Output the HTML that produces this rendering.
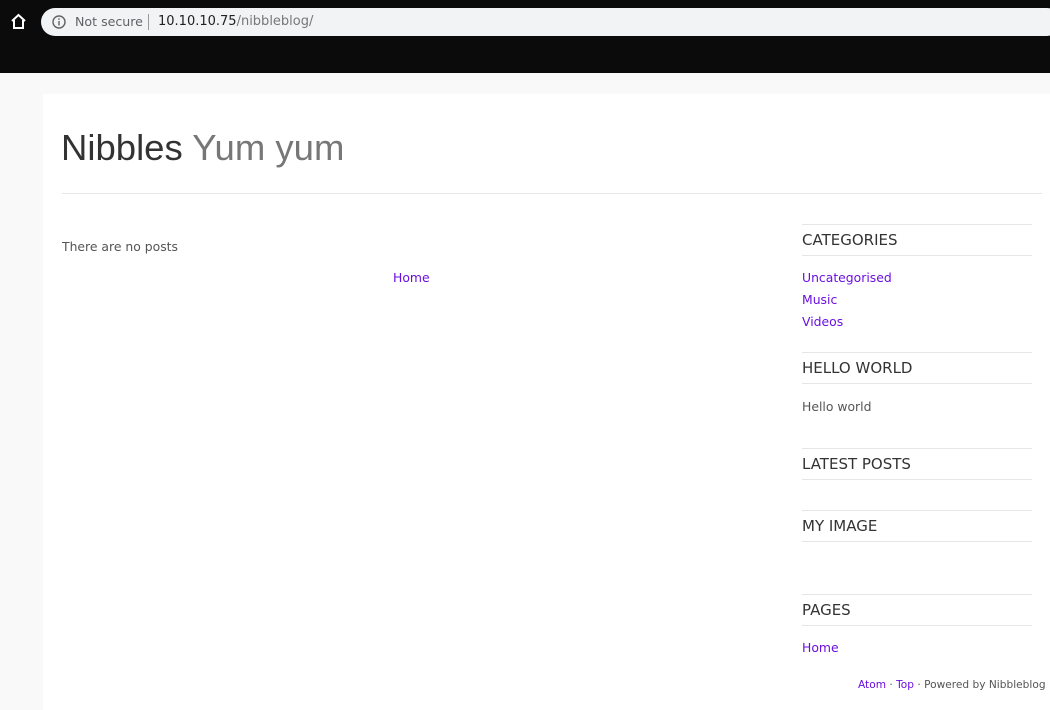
<!DOCTYPE html>
<html><head><meta charset="utf-8"><style>
body{margin:0;width:1050px;height:710px;overflow:hidden;background:#f9f9f9;font-family:"DejaVu Sans","Liberation Sans",sans-serif;color:#555;position:relative}
.top{position:absolute;left:0;top:0;width:1050px;height:73px;background:#0b0b0b}
.url{position:absolute;left:41px;top:8px;width:1020px;height:28px;border-radius:14px;background:#f1f3f4;font-size:12.6px;line-height:28px}
.a{position:absolute;font-size:12.4px;white-space:nowrap}
a,.l{color:#6b0fe0;text-decoration:none}
.page{position:absolute;left:43px;top:94px;width:1007px;height:616px;background:#fff}
.hr{position:absolute;height:1px;background:#e6e6e6}
.h{position:absolute;left:802px;font-size:15px;color:#333}
</style></head><body>
<div class="top"></div>
<svg style="position:absolute;left:10px;top:13px" width="17" height="17" viewBox="0 0 17 17"><path d="M2 8 L8.5 2 L15 8 M4 7 V15 H13 V7" fill="none" stroke="#fff" stroke-width="2"/></svg>
<div class="url">
<svg style="position:absolute;left:11px;top:7px" width="14" height="14" viewBox="0 0 14 14"><circle cx="7" cy="7" r="6" fill="none" stroke="#5f6368" stroke-width="1.4"/><rect x="6.3" y="6" width="1.4" height="4.5" fill="#5f6368"/><rect x="6.3" y="3.3" width="1.4" height="1.5" fill="#5f6368"/></svg>
<span style="position:absolute;left:34px;color:#5f6368">Not secure</span>
<span style="position:absolute;left:107px;top:6px;width:1px;height:16px;background:#999"></span>
<span style="position:absolute;left:117px;color:#202124;font-size:13px">10.10.10.75<span style="color:#777">/nibbleblog/</span></span>
</div>
<div class="page"></div>
<div class="a" style="left:61px;top:127px;font-size:36.5px;color:#333;font-family:'Liberation Sans',sans-serif">Nibbles <span style="color:#777">Yum yum</span></div>
<div class="hr" style="left:62px;top:193px;width:980px"></div>
<div class="a" style="left:62px;top:239px">There are no posts</div>
<div class="a l" style="left:393px;top:270px">Home</div>
<div class="hr" style="left:802px;top:224px;width:230px"></div>
<div class="h" style="top:231px">CATEGORIES</div>
<div class="hr" style="left:802px;top:255px;width:230px"></div>
<div class="a l" style="left:802px;top:270px">Uncategorised</div>
<div class="a l" style="left:802px;top:292px">Music</div>
<div class="a l" style="left:802px;top:314px">Videos</div>
<div class="hr" style="left:802px;top:352px;width:230px"></div>
<div class="h" style="top:359px">HELLO WORLD</div>
<div class="hr" style="left:802px;top:383px;width:230px"></div>
<div class="a" style="left:802px;top:399px">Hello world</div>
<div class="hr" style="left:802px;top:448px;width:230px"></div>
<div class="h" style="top:455px">LATEST POSTS</div>
<div class="hr" style="left:802px;top:479px;width:230px"></div>
<div class="hr" style="left:802px;top:510px;width:230px"></div>
<div class="h" style="top:517px">MY IMAGE</div>
<div class="hr" style="left:802px;top:541px;width:230px"></div>
<div class="hr" style="left:802px;top:594px;width:230px"></div>
<div class="h" style="top:601px">PAGES</div>
<div class="hr" style="left:802px;top:625px;width:230px"></div>
<div class="a l" style="left:802px;top:640px">Home</div>
<div class="a" style="left:858px;top:679px;font-size:10.6px"><span class="l">Atom</span> · <span class="l">Top</span> · Powered by Nibbleblog</div>
</body></html>
